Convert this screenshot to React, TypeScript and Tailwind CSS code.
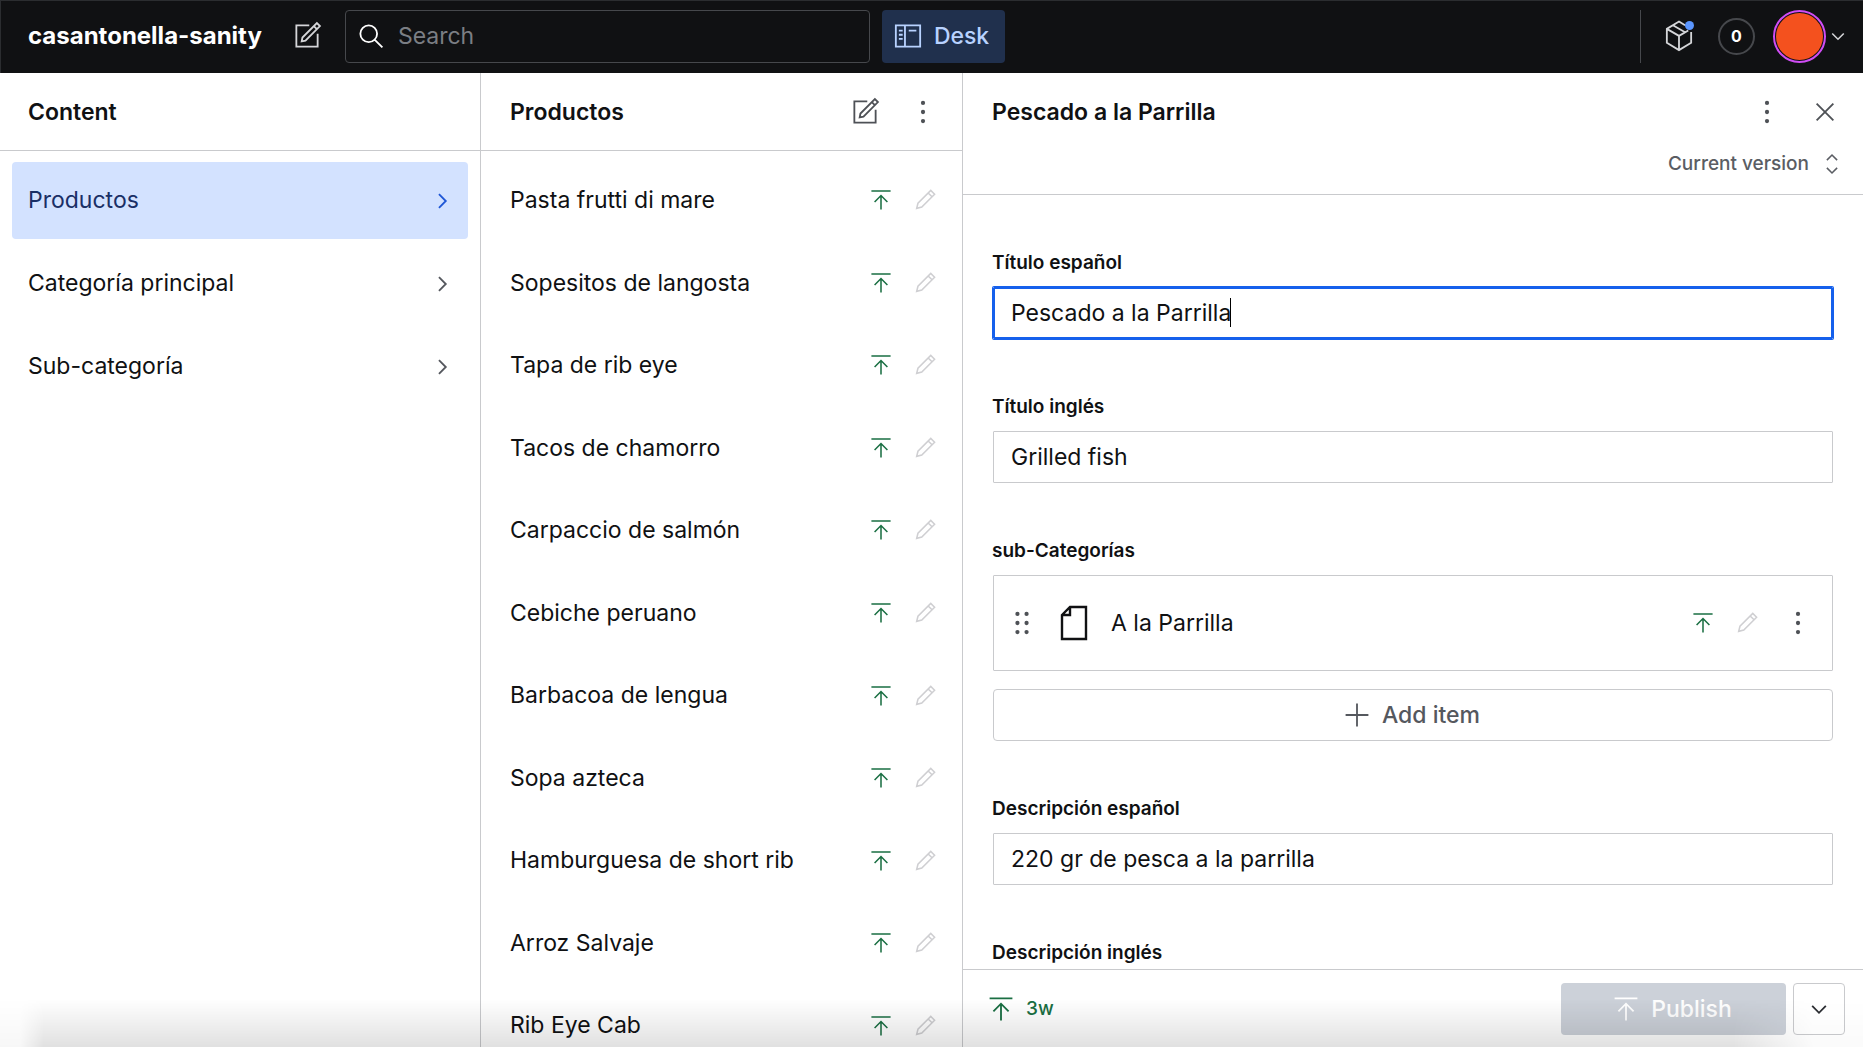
import { useState, type ReactNode } from 'react';

type IconProps = { className?: string; children?: ReactNode };

function Icon({ className = 'size-[38px]', children }: IconProps) {
  return (
    <svg
      viewBox="0 0 25 25"
      fill="none"
      stroke="currentColor"
      strokeWidth={1.2}
      aria-hidden="true"
      className={`shrink-0 ${className}`}
    >
      {children}
    </svg>
  );
}

const ComposeIcon = ({ className }: IconProps) => (
  <Icon className={className}>
    <path d="M17 6L19 8M14 5.5H5.5V19.5H19.5V11M9 16L9.5 13.5L19 4L21 6L11.5 15.5L9 16Z" />
  </Icon>
);

const SearchIcon = ({ className }: IconProps) => (
  <Icon className={className}>
    <path d="M15 15L20 20M16.5 11A5.5 5.5 0 1 1 5.5 11A5.5 5.5 0 0 1 16.5 11Z" />
  </Icon>
);

const PanelIcon = ({ className }: IconProps) => (
  <Icon className={className}>
    <path d="M10.5 5.5V19.5M13 9H18M6.5 9H9M6.5 11.7H9M6.5 14.4H9M4.5 5.5H20.5V19.5H4.5V5.5Z" />
  </Icon>
);

const PackageIcon = ({ className }: IconProps) => (
  <Icon className={className}>
    <path d="M16.5 5.4L12.5 3L4.5 7.8V17L12.5 21.8L20.5 17V9.8M4.5 7.8L12.5 12.4V21.8M12.5 12.4L18.6 8.9M8.5 5.4L16.5 10" />
  </Icon>
);

const PublishIcon = ({ className }: IconProps) => (
  <Icon className={className}>
    <path d="M5 5.5H20M12.5 9V20M7.5 14L12.5 9L17.5 14" />
  </Icon>
);

const PencilIcon = ({ className }: IconProps) => (
  <Icon className={className}>
    <path d="M15 7L18 10M6 19L7 15L17 5L20 8L10 18L6 19Z" />
  </Icon>
);

const ChevronRightIcon = ({ className }: IconProps) => (
  <Icon className={className}>
    <path d="M10.5 8L15 12.5L10.5 17" />
  </Icon>
);

const ChevronDownIcon = ({ className }: IconProps) => (
  <Icon className={className}>
    <path d="M17 10.5L12.5 15L8 10.5" />
  </Icon>
);

const SelectIcon = ({ className }: IconProps) => (
  <Icon className={className}>
    <path d="M16.5 15.5L12.5 19.5L8.5 15.5M8.5 9.5L12.5 5.5L16.5 9.5" />
  </Icon>
);

const CloseIcon = ({ className }: IconProps) => (
  <Icon className={className}>
    <path d="M18 7L7 18M7 7L18 18" />
  </Icon>
);

const AddIcon = ({ className }: IconProps) => (
  <Icon className={className}>
    <path d="M12.5 5V20M5 12.5H20" />
  </Icon>
);

const DocumentIcon = ({ className }: IconProps) => (
  <Icon className={className}>
    <path d="M6.5 8.5L10.5 4.5H18.5V20.5H6.5V8.5ZM10.5 4.5V8.5H6.5" />
  </Icon>
);

const DotsIcon = ({ className }: IconProps) => (
  <Icon className={className}>
    <g fill="currentColor" stroke="none">
      <circle cx="12.5" cy="6.5" r="1.4" />
      <circle cx="12.5" cy="12.5" r="1.4" />
      <circle cx="12.5" cy="18.5" r="1.4" />
    </g>
  </Icon>
);

const DragIcon = ({ className }: IconProps) => (
  <Icon className={className}>
    <g fill="currentColor" stroke="none">
      <circle cx="9.5" cy="6.5" r="1.4" />
      <circle cx="9.5" cy="12.5" r="1.4" />
      <circle cx="9.5" cy="18.5" r="1.4" />
      <circle cx="15.5" cy="6.5" r="1.4" />
      <circle cx="15.5" cy="12.5" r="1.4" />
      <circle cx="15.5" cy="18.5" r="1.4" />
    </g>
  </Icon>
);

const contentTypes = ['Productos', 'Categoría principal', 'Sub-categoría'];

const products = [
  'Pasta frutti di mare',
  'Sopesitos de langosta',
  'Tapa de rib eye',
  'Tacos de chamorro',
  'Carpaccio de salmón',
  'Cebiche peruano',
  'Barbacoa de lengua',
  'Sopa azteca',
  'Hamburguesa de short rib',
  'Arroz Salvaje',
  'Rib Eye Cab',
];

function StatusIcons() {
  return (
    <span className="flex items-center gap-3">
      <PublishIcon className="size-8 text-[#1a6f43]" />
      <PencilIcon className="size-8 text-[#cfcfd2]" />
    </span>
  );
}

function Navbar() {
  return (
    <header className="flex h-[73px] shrink-0 items-center bg-[#101113] pr-[9px] pb-px pl-7 text-white shadow-[inset_1px_1px_0_#2b2d30]">
      <a href="#" className="text-2xl font-bold">
        casantonella-sanity
      </a>
      <button aria-label="New document" className="ml-[26px] text-[#d5d6d9]">
        <ComposeIcon />
      </button>
      <label className="ml-[19px] flex h-[53px] w-[525px] items-center rounded border border-[#46484c] pl-[6px]">
        <SearchIcon />
        <input
          type="search"
          placeholder="Search"
          aria-label="Search"
          className="ml-2 min-w-0 flex-1 bg-transparent text-[23px] outline-none placeholder:text-[#7b7e84]"
        />
      </label>
      <button className="ml-3 flex h-[53px] items-center gap-[7px] rounded bg-[#20304d] pr-4 pl-[7px] text-[23px] font-medium text-[#b8d2ff]">
        <PanelIcon />
        Desk
      </button>
      <div className="ml-auto flex h-[53px] items-center border-l border-[#46484c] pl-[19px]">
        <button aria-label="Packages" className="relative text-[#d5d6d9]">
          <PackageIcon />
          <span className="absolute top-1 right-1 size-[9px] rounded-full bg-[#5b96ff]" />
        </button>
        <button className="ml-5 flex size-[37px] items-center justify-center rounded-full border-2 border-[#46484c] text-base font-bold">
          0
        </button>
        <button aria-label="Account" className="ml-[18px] flex items-center">
          <span className="size-[53px] rounded-full border-2 border-[#d04df5] p-px">
            <span className="block size-full rounded-full bg-[#f4511e]" />
          </span>
          <ChevronDownIcon className="-ml-1 size-8 text-[#d5d6d9]" />
        </button>
      </div>
    </header>
  );
}

function ContentPane() {
  return (
    <nav className="flex min-w-0 flex-col border-r border-[#c9cacd]">
      <div className="flex h-[78px] shrink-0 items-center border-b border-[#c9cacd] px-7 pt-px">
        <h2 className="text-[23px] font-semibold">Content</h2>
      </div>
      <ul className="flex flex-col gap-[6px] px-3 py-[11px]">
        {contentTypes.map((name, i) => (
          <li key={name}>
            <a
              href="#"
              className={
                i === 0
                  ? 'flex h-[77px] items-center justify-between rounded bg-[#d3e2ff] pr-[7px] pl-4 text-[23px] text-[#1a2f66]'
                  : 'flex h-[77px] items-center justify-between rounded pr-[7px] pl-4 text-[23px]'
              }
            >
              {name}
              <ChevronRightIcon className={i === 0 ? 'size-[38px] text-[#1f57d6]' : 'size-[38px] text-[#55585e]'} />
            </a>
          </li>
        ))}
      </ul>
    </nav>
  );
}

function ProductsPane() {
  return (
    <section className="flex min-h-0 min-w-0 flex-col overflow-hidden border-r border-[#c9cacd]">
      <div className="flex h-[78px] shrink-0 items-center border-b border-[#c9cacd] pt-px pr-5 pl-[29px]">
        <h2 className="flex-1 text-[23px] font-semibold">Productos</h2>
        <button aria-label="New product" className="text-[#4e5156]">
          <ComposeIcon />
        </button>
        <button aria-label="More actions" className="ml-5 text-[#4e5156]">
          <DotsIcon />
        </button>
      </div>
      <ul className="box-content grid h-[902px] shrink-0 auto-rows-fr gap-[6px] px-3 pt-[11px]">
        {products.map((name) => (
          <li key={name}>
            <a href="#" className="flex h-full items-center justify-between rounded pr-[9px] pl-[17px] text-[23px]">
              {name}
              <StatusIcons />
            </a>
          </li>
        ))}
      </ul>
    </section>
  );
}

function Label({ htmlFor, children }: { htmlFor: string; children: ReactNode }) {
  return (
    <label htmlFor={htmlFor} className="mb-[11px] block w-fit text-[19px] leading-6 font-semibold">
      {children}
    </label>
  );
}

function TextField({ id, label, value, active = false }: { id: string; label: string; value: string; active?: boolean }) {
  const [text, setText] = useState(value);
  return (
    <div>
      <Label htmlFor={id}>{label}</Label>
      <div className="relative p-px">
        <input
          id={id}
          value={text}
          onChange={(e) => setText(e.target.value)}
          className={
            active
              ? 'block h-[52px] w-full rounded-[1px] border border-[#1560ec] px-[17px] text-[23px] shadow-[0_0_0_1px_#1560ec,inset_0_0_0_1px_#1560ec] outline-none'
              : 'block h-[52px] w-full rounded-[1px] border border-[#c9cacd] px-[17px] text-[23px] outline-none'
          }
        />
        {active && <span className="absolute top-3 left-[238px] h-[29px] w-px bg-black" />}
      </div>
    </div>
  );
}

function DocumentPane() {
  return (
    <section className="flex min-h-0 min-w-0 flex-col">
      <div className="shrink-0 border-b border-[#c9cacd] pr-[19px] pl-[29px]">
        <div className="flex h-[77px] items-center pt-px">
          <h2 className="flex-1 text-[23px] font-semibold">Pescado a la Parrilla</h2>
          <button aria-label="Document actions" className="text-[#4e5156]">
            <DotsIcon />
          </button>
          <button aria-label="Close" className="ml-5 text-[#4e5156]">
            <CloseIcon />
          </button>
        </div>
        <div className="flex justify-end pb-3">
          <button className="flex h-8 items-center gap-[7px] pb-1 text-[19px] font-medium text-[#5a5d63]">
            Current version
            <SelectIcon className="-mr-1 size-8" />
          </button>
        </div>
      </div>

      <form className="flex min-h-0 flex-1 flex-col gap-[55px] overflow-hidden px-[29px] pt-14">
        <TextField id="titulo-es" label="Título español" value="Pescado a la Parrilla" active />
        <TextField id="titulo-en" label="Título inglés" value="Grilled fish" />
        <div>
          <Label htmlFor="add-item">sub-Categorías</Label>
          <div className="flex flex-col gap-[18px] p-px">
            <div className="flex h-24 items-center rounded-[1px] border border-[#c9cacd] pr-[15px] pl-[9px]">
              <button type="button" aria-label="Reorder" className="text-[#4e5156]">
                <DragIcon />
              </button>
              <DocumentIcon className="ml-2 size-[50px]" />
              <span className="ml-3 flex-1 text-[23px]">A la Parrilla</span>
              <StatusIcons />
              <button type="button" aria-label="Item actions" className="ml-4 text-[#4e5156]">
                <DotsIcon />
              </button>
            </div>
            <button
              id="add-item"
              type="button"
              className="flex h-[52px] items-center justify-center gap-[6px] rounded border border-[#c9cacd] pr-2 text-[23px] font-medium text-[#55585e]"
            >
              <AddIcon />
              Add item
            </button>
          </div>
        </div>
        <TextField id="desc-es" label="Descripción español" value="220 gr de pesca a la parrilla" />
        <TextField id="desc-en" label="Descripción inglés" value="" />
      </form>

      <footer className="flex shrink-0 items-center border-t border-[#c9cacd] bg-white pt-[13px] pr-[18px] pb-3 pl-[19px]">
        <button className="flex items-center gap-[6px] text-[19px] font-medium text-[#1a6f43]">
          <PublishIcon />
          3w
        </button>
        <button
          disabled
          className="ml-auto flex h-[52px] w-[225px] items-center justify-center gap-[6px] rounded bg-[#ccd1d9] pr-2 text-[23px] font-medium text-white"
        >
          <PublishIcon />
          Publish
        </button>
        <button
          aria-label="More publish options"
          className="ml-[7px] flex size-[52px] items-center justify-center rounded border border-[#c9cacd] bg-white text-[#2c2e33]"
        >
          <ChevronDownIcon />
        </button>
      </footer>
    </section>
  );
}

export default function App() {
  return (
    <div className="relative flex h-screen flex-col overflow-hidden bg-white font-[Inter,sans-serif] text-[#101113]">
      <Navbar />
      <main className="grid min-h-0 flex-1 grid-cols-[481fr_482fr_900fr] grid-rows-1">
        <ContentPane />
        <ProductsPane />
        <DocumentPane />
      </main>
      <div className="pointer-events-none absolute inset-x-0 bottom-0 h-12 bg-linear-to-t from-black/12 to-transparent [mask-image:linear-gradient(to_right,rgba(0,0,0,.25)_20px,black_44px,black_calc(100%-130px),rgba(0,0,0,.15)_calc(100%-50px))]" />
    </div>
  );
}
